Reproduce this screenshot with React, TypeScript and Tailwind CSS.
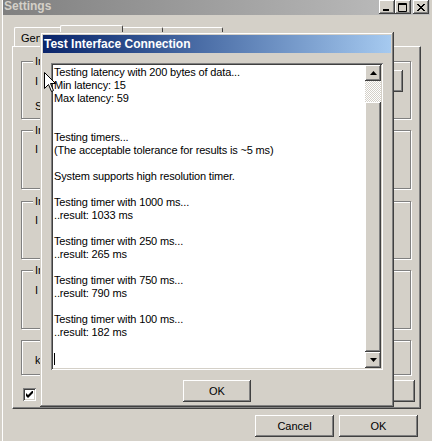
import React from 'react';

const raised =
  'shadow-[inset_-1px_-1px_0_#404040,inset_1px_1px_0_#ffffff,inset_-2px_-2px_0_#808080,inset_2px_2px_0_#d4d0c8]';
const etched = 'border border-[#808080] shadow-[inset_1px_1px_0_#ffffff,1px_1px_0_#ffffff]';

const log = [
  'Testing latency with 200 bytes of data...',
  'Min latency: 15',
  'Max latency: 59',
  '',
  '',
  'Testing timers...',
  '(The acceptable tolerance for results is ~5 ms)',
  '',
  'System supports high resolution timer.',
  '',
  'Testing timer with 1000 ms...',
  '..result: 1033 ms',
  '',
  'Testing timer with 250 ms...',
  '..result: 265 ms',
  '',
  'Testing timer with 750 ms...',
  '..result: 790 ms',
  '',
  'Testing timer with 100 ms...',
  '..result: 182 ms',
  '',
];

function CaptionButton({ kind }: { kind: 'min' | 'max' | 'close' }) {
  return (
    <div className={`w-[16px] h-[14px] bg-[#d4d0c8] flex items-center justify-center ${raised}`}>
      <svg width="10" height="9" viewBox="0 0 10 9">
        {kind === 'min' && <rect x="1" y="6" width="6" height="2" fill="#000" />}
        {kind === 'max' && (
          <path d="M0.5 0.5 H8.5 V8.5 H0.5 Z M0.5 1.5 H8.5" fill="none" stroke="#000" />
        )}
        {kind === 'close' && (
          <path d="M1 1 L8 8 M2 1 L9 8 M8 1 L1 8 M9 1 L2 8" stroke="#000" strokeWidth="1" />
        )}
      </svg>
    </div>
  );
}

// group boxes on the Settings page; only their left ends show past the dialog
function GroupBox({
  caption,
  className,
  children,
}: {
  caption?: string;
  className: string;
  children?: React.ReactNode;
}) {
  return (
    <div className={`relative ml-[8px] w-[390px] ${etched} ${className}`}>
      {caption && (
        <span className="absolute left-[11px] -top-[7px] px-[2px] bg-[#d4d0c8] leading-[13px]">
          {caption}
        </span>
      )}
      {children}
    </div>
  );
}

function Row({ label, className, button }: { label: string; className: string; button?: boolean }) {
  return (
    <div className={`flex items-center h-[22px] pl-[13px] pr-[7px] ${className}`}>
      <span className="leading-[13px]">{label}</span>
      {button && <div className={`ml-auto w-[75px] h-[22px] ${raised}`} />}
    </div>
  );
}

function ScrollArrow({ up }: { up?: boolean }) {
  return (
    <div className={`w-[16px] h-[16px] bg-[#d4d0c8] flex items-center justify-center ${raised}`}>
      <svg width="7" height="4" viewBox="0 0 7 4">
        <path d={up ? 'M3.5 0 L7 4 H0 Z' : 'M0 0 H7 L3.5 4 Z'} fill="#000" />
      </svg>
    </div>
  );
}

function TestDialog() {
  return (
    <div className="absolute z-20 left-[40px] top-[32px] w-[354px] h-[375px] bg-[#d4d0c8] p-[3px] shadow-[inset_-1px_-1px_0_#404040,inset_1px_1px_0_#d4d0c8,inset_-2px_-2px_0_#808080,inset_2px_2px_0_#ffffff] flex flex-col">
      <div className="h-[18px] bg-linear-to-r from-[#0a246a] to-[#a6caf0] flex items-center pl-[1px] text-white font-bold text-[12px]">
        Test Interface Connection
      </div>
      <div className="mt-[10px] ml-[8px] w-[332px] h-[307px] p-[2px] bg-white shadow-[inset_1px_1px_0_#808080,inset_-1px_-1px_0_#ffffff,inset_2px_2px_0_#404040,inset_-2px_-2px_0_#d4d0c8] flex">
        <div className="flex-1 pl-[1px] pt-[1px] leading-[13px] tracking-[-0.15px] text-black overflow-hidden">
          {log.map((line, i) => (
            <div key={i} className="h-[13px] whitespace-pre">
              {line}
            </div>
          ))}
          <div className="h-[13px] flex items-center">
            <span className="block w-[1px] h-[12px] bg-black" />
          </div>
        </div>
        <div className="w-[16px] flex flex-col">
          <ScrollArrow up />
          <div className="h-[21px] bg-[repeating-conic-gradient(#ffffff_0_25%,#d4d0c8_0_50%)] bg-[length:2px_2px]" />
          <div className={`flex-1 bg-[#d4d0c8] ${raised}`} />
          <ScrollArrow />
        </div>
      </div>
      <div className="mt-[10px] flex justify-center">
        <div className={`w-[68px] h-[22px] flex items-center justify-center ${raised}`}>OK</div>
      </div>
    </div>
  );
}

export default function App() {
  return (
    <div className="relative w-[432px] h-[441px] overflow-hidden bg-[#d4d0c8] text-[11px] text-black font-['Liberation_Sans',Arial,sans-serif]">
      <div className="ml-[2px] mr-[2px] h-full border-l border-white flex flex-col">
        {/* title bar */}
        <div className="h-[15px] bg-linear-to-r from-[#808080] to-[#c0c0c0] flex items-start pl-[1px]">
          <span className="font-bold text-[12px] text-[#d4d0c8] leading-[13px]">Settings</span>
          <div className="ml-auto flex mr-[1px]">
            <CaptionButton kind="min" />
            <CaptionButton kind="max" />
            <div className="w-[2px]" />
            <CaptionButton kind="close" />
          </div>
        </div>

        {/* tabs */}
        <div className="mt-[10px] ml-[9px] h-[21px] flex items-end">
          <div className="ml-[2px] w-[48px] h-[19px] border-t border-l border-white rounded-tl-[2px] flex items-center pl-[6px] pt-[3px]">
            Gen
          </div>
          <div className="relative z-10 -ml-[2px] -mb-[1px] w-[63px] h-[22px] bg-[#d4d0c8] border-t border-l border-r border-t-white border-l-white border-r-[#404040] rounded-t-[2px]" />
          <div className="w-[40px] h-[19px] border-t border-r border-t-white border-r-[#404040] rounded-tr-[2px]" />
          <div className="w-[60px] h-[19px] border-t border-r border-t-white border-r-[#404040] rounded-tr-[2px]" />
        </div>

        {/* panel */}
        <div className="ml-[9px] w-[409px] h-[363px] border-t border-l border-white border-r border-b border-r-[#404040] border-b-[#404040] shadow-[inset_-1px_-1px_0_#808080] flex flex-col">
          <GroupBox caption="In" className="mt-[14px] h-[58px] pt-[8px]">
            <Row label="I" className="" button />
            <Row label="S" className="mt-[3px]" />
          </GroupBox>
          <GroupBox caption="In" className="mt-[11px] h-[59px] pt-[7px]">
            <Row label="I" className="" />
          </GroupBox>
          <GroupBox caption="In" className="mt-[12px] h-[58px] pt-[7px]">
            <Row label="I" className="" />
          </GroupBox>
          <GroupBox caption="In" className="mt-[11px] h-[59px] pt-[8px]">
            <Row label="I" className="" />
          </GroupBox>
          <GroupBox className="mt-[11px] h-[35px] pt-[9px]">
            <div className="pl-[13px] leading-[13px] pt-[4px]">k</div>
          </GroupBox>
          <div className="mt-[5px] h-[22px] flex items-start">
            <div className="ml-[10px] mt-[8px] w-[13px] h-[13px] bg-white shadow-[inset_1px_1px_0_#808080,inset_-1px_-1px_0_#ffffff,inset_2px_2px_0_#404040,inset_-2px_-2px_0_#d4d0c8] flex items-center justify-center">
              <svg width="7" height="7" viewBox="0 0 7 7">
                <path d="M0 2 L2 4 L7 -1 V2 L2 7 L0 5 Z" fill="#000" />
              </svg>
            </div>
            <div className={`ml-auto mr-[5px] w-[75px] h-[22px] ${raised}`} />
          </div>
        </div>

        {/* bottom buttons */}
        <div className="mt-[6px] pl-[252px] flex gap-[5px]">
          <div className={`w-[79px] h-[22px] flex items-center justify-center ${raised}`}>Cancel</div>
          <div className={`w-[79px] h-[22px] flex items-center justify-center ${raised}`}>OK</div>
        </div>
      </div>

      <TestDialog />

      {/* mouse pointer */}
      <svg className="absolute z-30 left-[44px] top-[72px]" width="12" height="20" viewBox="0 0 12 20">
        <path d="M0.5 0.5 V16.5 L4.5 12.5 L7.5 19.5 L9.5 18.5 L6.5 11.5 H11.5 Z" fill="#fff" stroke="#000" />
      </svg>
    </div>
  );
}
